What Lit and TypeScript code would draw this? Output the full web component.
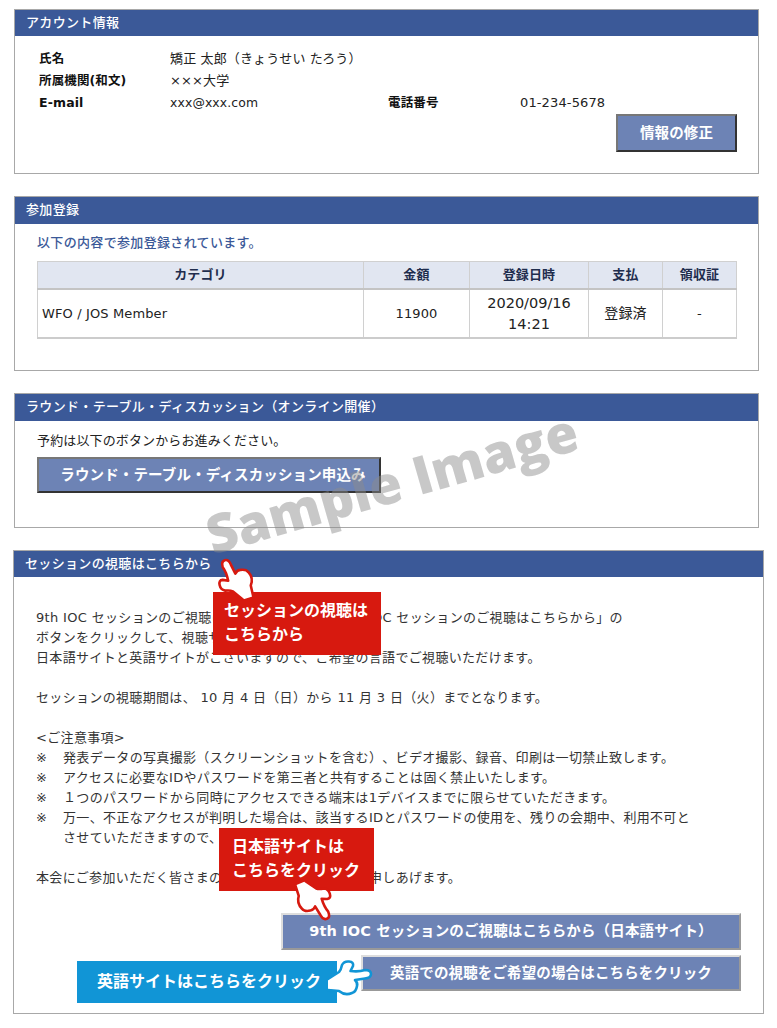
import { LitElement, css, html, svg } from "lit";
import { customElement } from "lit/decorators.js";

// one hand drawing, pointing right; the callouts rotate it with a class
const hand = (cls: string) => html`<svg class="hand ${cls}" width="46" height="38" viewBox="0 0 46 38">
  ${svg`<path d="M1 20 L12 13 Q14 11 15 6 Q17 2 22 2.5 Q27 3 26 7 L23.5 12 Q32 13 38 11 Q44 11 44 15 Q44 19 38 19.5 L28 21 Q31 24 30 27 Q29 33 25 34 Q18 37 12 32 L1 31" fill="#fff" stroke="currentColor" stroke-width="2.6" stroke-linejoin="round" stroke-linecap="round"/>`}
</svg>`;

@customElement("app-root")
export class AppRoot extends LitElement {
  static styles = css`
    :host {
      display: block;
      position: relative;
      width: 777px;
      height: 1028px;
      overflow: hidden;
      background: #fff;
      box-sizing: border-box;
      padding: 9px 18px 0 14px;
      color: #333;
      font: 13px/20px "DejaVu Sans", "Noto Sans CJK JP", sans-serif;
      letter-spacing: 0.33px;
      text-spacing-trim: space-all;
    }
    .card {
      border: 1px solid #a8a8a8;
      box-sizing: border-box;
      margin-bottom: 22px;
    }
    .card-head {
      background: #3b5998;
      color: #fff;
      height: 26px;
      line-height: 25px;
      padding-left: 11px;
      font-size: 13px;
      font-weight: 500;
    }
    .account { height: 165px; }
    .account .body { padding: 12px 21px 0 24px; }
    .info {
      display: grid;
      grid-template-columns: 131px 218px 132px 1fr;
      grid-auto-rows: 22px;
      align-items: center;
      color: #222;
      letter-spacing: 0.13px;
    }
    .info b { font-weight: 700; color: #111; font-size: 12.5px; }
    .mail { font-size: 12.4px; }
    .btn {
      display: block;
      box-sizing: border-box;
      background: #6d83b5;
      color: #fff;
      font: 700 14.5px/1 "DejaVu Sans", "Noto Sans CJK JP", sans-serif;
      letter-spacing: 0.13px;
      text-spacing-trim: space-all;
      text-align: center;
      padding: 0;
      cursor: pointer;
    }
    .btn.dark {
      border: 2px solid;
      border-color: #777 #333 #333 #777;
    }
    .btn.light {
      border: 2px solid;
      border-color: #ddd #999 #999 #ddd;
    }
    .edit-row {
      display: flex;
      justify-content: flex-end;
    }
    .edit { width: 121px; height: 38px; }

    .signup { height: 175px; }
    .signup .card-head, .round .card-head { height: 27px; }
    .signup .body { padding: 9px 22px 0 22px; }
    .lead { color: #3b5998; font-weight: 500; margin: 0 0 8px; }
    table {
      width: 699px;
      border-collapse: collapse;
      table-layout: fixed;
      border-bottom: 2px solid #ccc;
      letter-spacing: 0.13px;
    }
    th, td {
      border: 1px solid #d0d0d0;
      text-align: center;
      font-size: 13px;
      padding: 0 4px;
    }
    th {
      height: 26px;
      background: #e1e6f1;
      color: #1f2d4d;
      font-weight: 700;
      font-size: 13px;
      border-bottom: 2px solid #c4c4c4;
    }
    td { height: 47px; line-height: 21px; color: #222; }
    td.name { text-align: left; }
    td.when { font-size: 14.5px; letter-spacing: 0; }
    td.paid { font-size: 14px; }

    .round { height: 135px; }
    .round .body { padding: 10px 22px 0 22px; }
    .round p { margin: 0 0 6px; color: #222; letter-spacing: 0.13px; }
    .apply { width: 344px; height: 36px; padding-left: 8px; }

    .session {
      position: relative;
      width: 751px;
      height: 464px;
      margin: 0 0 0 -1px;
    }
    .session .body { padding: 31px 22px 0 22px; }
    .session p { margin: 0 0 20px; white-space: pre-line; }
    .session .notes-title { margin: 0; }
    .notes { margin: 0 0 20px; padding: 0; list-style: none; }
    .notes li {
      display: grid;
      grid-template-columns: 27px 1fr;
      width: 655px;
    }
    .tight { letter-spacing: -0.1px; }
    .actions {
      display: flex;
      flex-direction: column;
      align-items: flex-end;
      gap: 5px;
      margin-top: 25px;
    }
    .jp-site { width: 460px; height: 37px; }
    .en-site { width: 380px; height: 36px; }

    /* callouts sit over the page content */
    .callout {
      position: absolute;
      box-sizing: border-box;
      color: #fff;
      font-weight: 700;
      font-size: 16px;
      line-height: 24px;
      white-space: nowrap;
      letter-spacing: 0;
    }
    .red { background: #d7190f; }
    .c1 { left: 199px; top: 41px; width: 168px; height: 63px; padding: 7px 0 0 11px; }
    .c2 { left: 205px; top: 277px; width: 155px; height: 63px; padding: 7px 0 0 13px; }
    .c3 { left: 63px; top: 410px; width: 260px; height: 42px; padding: 9px 0 0 20px; background: #1195d6; }
    .hand { position: absolute; overflow: visible; }
    .h1 { left: 198px; top: 9px; color: #d7190f; transform: rotate(-108deg); }
    .h2 { left: 278px; top: 331px; color: #d7190f; transform: rotate(67deg); }
    .h3 { left: 313px; top: 408px; color: #1195d6; }

    .watermark {
      position: absolute;
      left: 200px;
      top: 448px;
      width: 380px;
      text-align: center;
      color: rgba(140, 140, 140, 0.48);
      font: 800 53px/70px "Open Sans", sans-serif;
      letter-spacing: 0;
      white-space: nowrap;
      transform: rotate(-16deg);
    }
  `;

  render() {
    return html`
      <section class="card account">
        <div class="card-head">アカウント情報</div>
        <div class="body">
          <div class="info">
            <b>氏名</b><span>矯正 太郎（きょうせい たろう）</span><span></span><span></span>
            <b>所属機関(和文)</b><span>×××大学</span><span></span><span></span>
            <b>E-mail</b><span class="mail">xxx@xxx.com</span><b>電話番号</b><span>01-234-5678</span>
          </div>
          <div class="edit-row"><button class="btn dark edit">情報の修正</button></div>
        </div>
      </section>

      <section class="card signup">
        <div class="card-head">参加登録</div>
        <div class="body">
          <p class="lead">以下の内容で参加登録されています。</p>
          <table>
            <colgroup>
              <col style="width:326px" /><col style="width:106px" /><col style="width:119px" /><col style="width:74px" /><col style="width:74px" />
            </colgroup>
            <tr><th>カテゴリ</th><th>金額</th><th>登録日時</th><th>支払</th><th>領収証</th></tr>
            <tr>
              <td class="name">WFO / JOS Member</td>
              <td>11900</td>
              <td class="when">2020/09/16<br />14:21</td>
              <td class="paid">登録済</td>
              <td>-</td>
            </tr>
          </table>
        </div>
      </section>

      <section class="card round">
        <div class="card-head">ラウンド・テーブル・ディスカッション（オンライン開催）</div>
        <div class="body">
          <p>予約は以下のボタンからお進みください。</p>
          <button class="btn dark apply">ラウンド・テーブル・ディスカッション申込み</button>
        </div>
      </section>

      <section class="card session">
        <div class="card-head">セッションの視聴はこちらから</div>
        <div class="body">
          <p>9th IOC セッションのご視聴<span class="tight">は、画面の下にある「</span>9th IOC セッションのご視聴はこちらから」の
          ボタンをクリックして、視聴サイトへお進みください。
          日本語サイトと英語サイトがございますので、ご希望の言語でご視聴いただけます。</p>
          <p>セッションの視聴期間は、 10 月 4 日（日）から 11 月 3 日（火）までとなります。</p>
          <div class="notes-title">&lt;ご注意事項&gt;</div>
          <ul class="notes">
            <li><span>※</span><span>発表データの写真撮影（スクリーンショットを含む）、ビデオ撮影、録音、印刷は一切禁止致します。</span></li>
            <li><span>※</span><span>アクセスに必要なIDやパスワードを第三者と共有することは固く禁止いたします。</span></li>
            <li><span>※</span><span>１つのパスワードから同時にアクセスできる端末は1デバイスまでに限らせていただきます。</span></li>
            <li><span>※</span><span>万一、不正なアクセスが判明した場合は、該当するIDとパスワードの使用を、残りの会期中、利用不可とさせていただきますので、ご了承ください。</span></li>
          </ul>
          <p>本会にご参加いただく皆さまのご理解とご協力をお願い申しあげます。</p>
          <div class="actions">
            <button class="btn light jp-site">9th IOC セッションのご視聴はこちらから（日本語サイト）</button>
            <button class="btn light en-site">英語での視聴をご希望の場合はこちらをクリック</button>
          </div>
        </div>
        <div class="callout red c1">セッションの視聴は<br />こちらから</div>
        ${hand("h1")}
        <div class="callout red c2">日本語サイトは<br />こちらをクリック</div>
        ${hand("h2")}
        <div class="callout c3">英語サイトはこちらをクリック</div>
        ${hand("h3")}
      </section>

      <div class="watermark">Sample Image</div>
    `;
  }
}
